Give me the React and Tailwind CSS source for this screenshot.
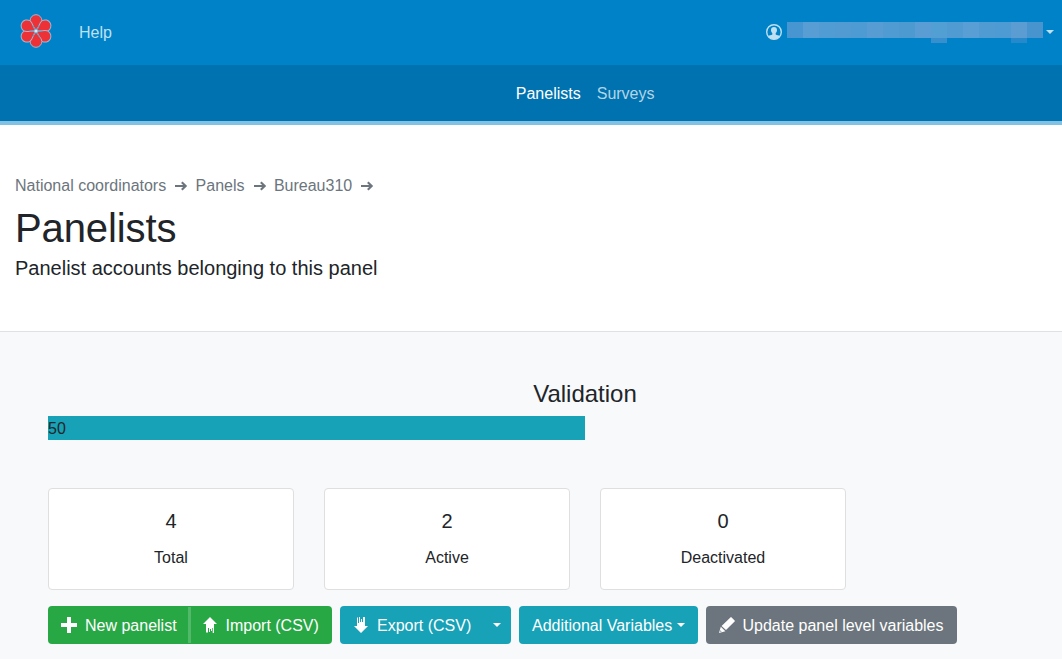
import React from "react";

const redactedBlocks = [
  "bg-[#4896d1]", "bg-[#589dd4]", "bg-[#519cd3]", "bg-[#519bd2]",
  "bg-[#4e9ad2]", "bg-[#579dd4]", "bg-[#509bd2]", "bg-[#4d9ad1]",
  "bg-[#5a9dd4]", "bg-[#529fd4]", "bg-[#4f9bd2]", "bg-[#599ed5]",
  "bg-[#509bd2]", "bg-[#4e9ad3]", "bg-[#5b9dd3]", "bg-[#4894cf]",
];

function Logo() {
  return (
    <svg className="block h-[36px] w-[36px]" viewBox="-18 -18 36 36" aria-hidden="true">
      {[0, 60, 120, 180, 240, 300].map((angle) => (
        <path
          key={angle}
          transform={`rotate(${angle})`}
          d="M0 0C-1-4-5.9-6.8-5.9-10.4a5.9 5.9 0 0 1 11.8 0C5.9-6.8 1-4 0 0Z"
          fill="#ed3237"
          stroke="#a9b5cd"
          strokeWidth="1"
        />
      ))}
      {[30, 90, 150].map((angle) => (
        <path key={angle} transform={`rotate(${angle})`} d="M0-6.5V6.5" stroke="#5a9cc8" strokeWidth="1" />
      ))}
      <circle r="1.6" fill="#e3e5ec" />
    </svg>
  );
}

function UserIcon() {
  return (
    <svg className="block h-4 w-4 shrink-0" viewBox="0 0 16 16" fill="none" aria-hidden="true">
      <circle cx="8" cy="8" r="7.3" stroke="#bfe0f1" strokeWidth="1.4" />
      <path d="M8 3C6.1 3 5 4.2 5 6.1c0 1.3.5 2.3 1.3 3v1.3c-1.2.7-2.8.8-4.2 1.4A7 7 0 0 0 8 15.3a7 7 0 0 0 5.9-3.5c-1.4-.6-3-.7-4.2-1.4V9.1c.8-.7 1.3-1.7 1.3-3C11 4.2 9.9 3 8 3Z" fill="#bfe0f1" />
    </svg>
  );
}

function Caret() {
  return <span className="inline-block h-0 w-0 border-x-[4.8px] border-t-[4.8px] border-x-transparent border-t-current" />;
}

function Arrow() {
  return (
    <svg className="mx-2 block h-[10px] w-[13.4px]" viewBox="0 0 13.4 10" fill="none" aria-hidden="true">
      <path d="M1 5h10.5M7.8 1.2 11.7 5 7.8 8.8" stroke="currentColor" strokeWidth="2.1" />
    </svg>
  );
}

function PlusIcon() {
  return (
    <svg className="h-4 w-4" viewBox="0 0 16 16" fill="currentColor" aria-hidden="true">
      <path d="M6 0h4v6h6v4h-6v6H6v-6H0V6h6Z" />
    </svg>
  );
}

function UploadIcon() {
  return (
    <svg className="h-4 w-[14px]" viewBox="0 0 14 16" fill="currentColor" aria-hidden="true">
      <path d="M7 0 0 7h3v8.5h2V11h1v4h1v-3h1v2h1v-3h.7v5H11V7h3Z" />
    </svg>
  );
}

function DownloadIcon() {
  return (
    <svg className="h-4 w-[14px]" viewBox="0 0 14 16" fill="currentColor" aria-hidden="true">
      <path d="M7 16 0 9h3V.5h1V6h1V0h1v5h1V2h1v3h1V0h2v9h3Z" />
    </svg>
  );
}

function PencilIcon() {
  return (
    <svg className="h-4 w-4" viewBox="0 0 16 16" fill="currentColor" aria-hidden="true">
      <path d="M11.4.4q.6-.6 1.2 0l3 3q.6.6 0 1.2L7 13.1 2.6 9Z" />
      <path fillRule="evenodd" d="m1.8 9.8 4.6 4.4L0 16Zm-.3 3.4-.4 1.6 1.6-.4Z" />
    </svg>
  );
}

function StatCard({ value, label }) {
  return (
    <div className="flex h-[102px] w-[246px] flex-col items-center rounded border border-[#dfdfdf] bg-white pt-5">
      <div className="mb-[13px] text-xl leading-6">{value}</div>
      <div>{label}</div>
    </div>
  );
}

function ButtonText({ children }) {
  return <span className="pt-[2px]">{children}</span>;
}

export default function App() {
  return (
    <div className="h-[659px] w-[1062px] overflow-hidden bg-[#f8f9fb] font-['Liberation_Sans',sans-serif] text-base leading-6 text-[#212529]">
      <header className="flex h-[65px] items-center bg-[#0082c8] pr-[8px] pl-[18px] text-[#bfe0f1]">
        <div className="-mt-[3px]"><Logo /></div>
        <a className="ml-[25px]">Help</a>
        <div className="ml-auto flex items-center">
          <div className="mb-[2px] flex items-center">
            <UserIcon />
            <div className="mr-[3px] mb-1 ml-[5px] flex h-4">
              {redactedBlocks.map((color, index) => (
                <div key={index} className={`relative h-4 w-4 ${color}`}>
                  {index === 9 && <span className="absolute top-4 left-0 h-[5px] w-4 bg-[#378fce]" />}
                  {index === 14 && <span className="absolute top-4 left-0 h-[5px] w-4 bg-[#2589cc]" />}
                </div>
              ))}
            </div>
          </div>
          <span className="mb-[2px] flex"><Caret /></span>
        </div>
      </header>
      <nav className="flex h-[60px] items-center gap-4 border-b-4 border-[#80c1e4] bg-[#0072af] pt-[2px] pl-[515.8px] text-[#b2d5e7]">
        <a className="text-white">Panelists</a>
        <a>Surveys</a>
      </nav>
      <section className="h-[207px] border-b border-[#dee2e6] bg-white px-[15px] pt-[49px]">
        <div className="flex h-6 items-center text-[#6c757d]">
          <span>National coordinators</span><Arrow />
          <span>Panels</span><Arrow />
          <span>Bureau310</span><Arrow />
        </div>
        <h1 className="mt-1.5 text-[40px] leading-[48px] tracking-[-0.1px]">Panelists</h1>
        <p className="mt-1 text-xl leading-6">Panelist accounts belonging to this panel</p>
      </section>
      <main className="w-[1122px] pt-12 pl-12">
        <h2 className="text-center text-2xl leading-7">Validation</h2>
        <div className="mt-2 h-6 w-1/2 bg-[#17a2b8] pt-px">50</div>
        <div className="mt-12 flex gap-[30px]">
          <StatCard value="4" label="Total" />
          <StatCard value="2" label="Active" />
          <StatCard value="0" label="Deactivated" />
        </div>
        <div className="mt-4 flex h-[38px] gap-2 text-white">
          <div className="flex w-[284px] rounded bg-[#28a745]">
            <button className="flex w-[140px] items-center gap-2 pl-[13px] whitespace-nowrap"><PlusIcon /><ButtonText>New panelist</ButtonText></button>
            <div className="my-px w-[3px] bg-[#53b96a]" />
            <button className="flex items-center gap-[8.5px] pl-3 whitespace-nowrap"><UploadIcon /><ButtonText>Import (CSV)</ButtonText></button>
          </div>
          <div className="flex w-[171px] items-center rounded bg-[#17a2b8] pl-[14px]">
            <button className="flex items-center gap-[9px] whitespace-nowrap"><DownloadIcon /><ButtonText>Export (CSV)</ButtonText></button>
            <button className="ml-auto flex pr-[10px]"><Caret /></button>
          </div>
          <button className="flex w-[179px] items-center gap-[5px] rounded bg-[#17a2b8] pl-[13px] whitespace-nowrap"><ButtonText>Additional Variables</ButtonText><Caret /></button>
          <button className="flex w-[251px] items-center gap-[7.5px] rounded bg-[#6c757d] pl-[13px] whitespace-nowrap"><PencilIcon /><ButtonText>Update panel level variables</ButtonText></button>
        </div>
      </main>
    </div>
  );
}
